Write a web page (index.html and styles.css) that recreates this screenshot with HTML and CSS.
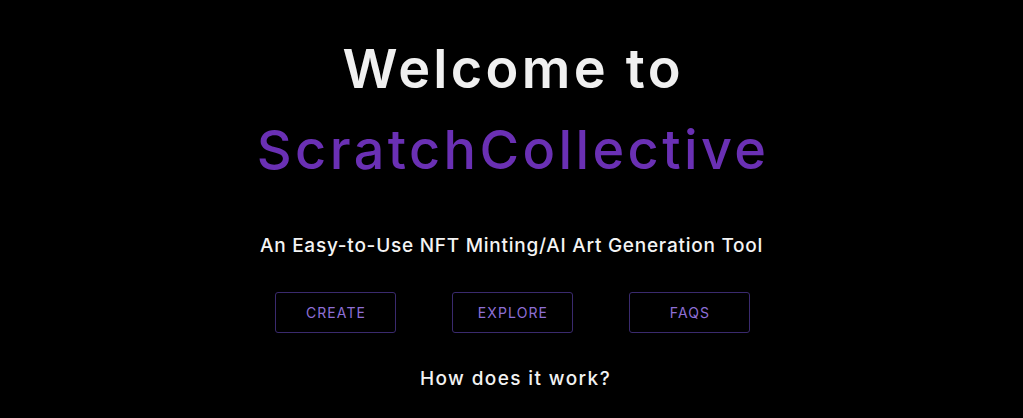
FILE: index.html
```html
<!DOCTYPE html>
<html>
<head>
<meta charset="utf-8">
<link rel="stylesheet" href="styles.css">
</head>
<body>
<main class="hero">
  <h1 class="title">
    <span class="line welcome">Welcome to</span>
    <span class="line brand">ScratchCollective</span>
  </h1>
  <p class="tagline">An Easy-to-Use NFT Minting/AI Art Generation Tool</p>
  <nav class="actions">
    <a class="btn" href="#">CREATE</a>
    <a class="btn" href="#">EXPLORE</a>
    <a class="btn" href="#">FAQS</a>
  </nav>
  <p class="how">How does it work?</p>
</main>
</body>
</html>
```

FILE: styles.css
```css
html, body {
  margin: 0;
  padding: 0;
  background: #000;
  height: 100%;
}
body {
  font-family: "Inter", "Noto Sans", sans-serif;
  color: #f2f2f2;
}
.hero {
  display: flex;
  flex-direction: column;
  align-items: center;
  padding-top: 28px;
}
.title {
  margin: 0;
  display: flex;
  flex-direction: column;
  align-items: center;
  font-size: 54px;
  line-height: 81px;
  font-weight: 600;
}
.line {
  letter-spacing: 3.3px;
  padding-left: 3.3px;
}
.welcome {
  color: #f0f0f0;
}
.brand {
  color: #6a30b4;
  font-weight: 500;
  letter-spacing: 3.4px;
}
.tagline {
  margin: 44px 0 0;
  font-size: 19px;
  font-weight: 500;
  color: #f4f4f4;
  letter-spacing: 0.75px;
}
.actions {
  display: flex;
  gap: 56px;
  margin-top: 35px;
  padding-left: 2px;
}
.btn {
  width: 118px;
  height: 39px;
  display: flex;
  align-items: center;
  justify-content: center;
  border: 1px solid #3a2a6e;
  border-radius: 3px;
  color: #8e6fd6;
  font-size: 14px;
  text-decoration: none;
  letter-spacing: 1.1px;
  padding-left: 1px;
}
.how {
  margin: 34px 0 0;
  font-size: 19px;
  font-weight: 500;
  color: #f2f2f2;
  letter-spacing: 1.4px;
  padding-left: 8px;
}
```
